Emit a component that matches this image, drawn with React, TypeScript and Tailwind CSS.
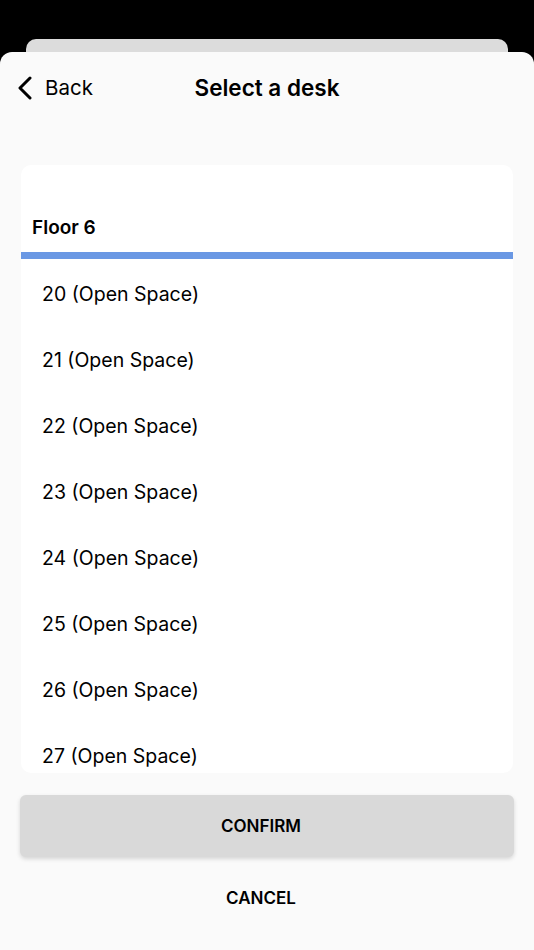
import React, { useState } from 'react'

const desks = [20, 21, 22, 23, 24, 25, 26, 27]

export default function App() {
    const [selected, setSelected] = useState<number | null>(null)

    return (
        <div className="h-[950px] bg-black flex flex-col overflow-hidden font-['Inter','Liberation_Sans',sans-serif] text-black">
            {/* stacked sheet behind */}
            <div className="mx-[26px] mt-[39px] h-[13px] bg-[#dcdcdc] rounded-t-[10px] shrink-0" />

            <div className="flex-1 bg-[#fafafa] rounded-t-[12px] flex flex-col min-h-0">
                <div className="grid grid-cols-[1fr_auto_1fr] items-center h-[36px] mt-[18px] shrink-0">
                    <div className="flex items-center gap-[12px] pl-[17px] text-[20.5px] leading-[24px]">
                        <svg width="16" height="24" viewBox="0 0 16 24" fill="none">
                            <path d="M13 2L3 12l10 10" stroke="black" strokeWidth="3" strokeLinecap="round" strokeLinejoin="round" />
                        </svg>
                        <span>Back</span>
                    </div>
                    <h1 className="text-[22.5px] font-semibold leading-[28px]">Select a desk</h1>
                    <div />
                </div>

                <div className="mx-[21px] mt-[59px] h-[608px] bg-white rounded-[10px] overflow-hidden flex flex-col shrink-0">
                    <div className="h-[87px] flex items-end pl-[11px] pb-[12px] shrink-0">
                        <span className="text-[19px] font-semibold leading-[24px]">Floor 6</span>
                    </div>
                    <div className="h-[7px] bg-[#6a98e4] shrink-0" />
                    <ul className="flex-1 overflow-hidden">
                        {desks.map((d) => (
                            <li
                                key={d}
                                onClick={() => setSelected(d)}
                                className={`h-[66px] flex items-center pl-[21px] pt-[4px] text-[19.5px] leading-[26px] ${selected === d ? 'bg-[#eef3fc]' : ''}`}
                            >
                                {d} (Open Space)
                            </li>
                        ))}
                    </ul>
                </div>

                <div className="mx-[20px] mt-[22px] h-[62px] bg-[#d9d9d9] rounded-[6px] shadow-[0_2px_4px_rgba(0,0,0,0.15)] flex items-center justify-center pr-[12px] shrink-0">
                    <span className="text-[17px] font-semibold leading-[22px]">CONFIRM</span>
                </div>
                <div className="mt-[20px] h-[42px] flex items-center justify-center pr-[12px] shrink-0">
                    <span className="text-[17px] font-semibold leading-[22px]">CANCEL</span>
                </div>
            </div>
        </div>
    )
}
